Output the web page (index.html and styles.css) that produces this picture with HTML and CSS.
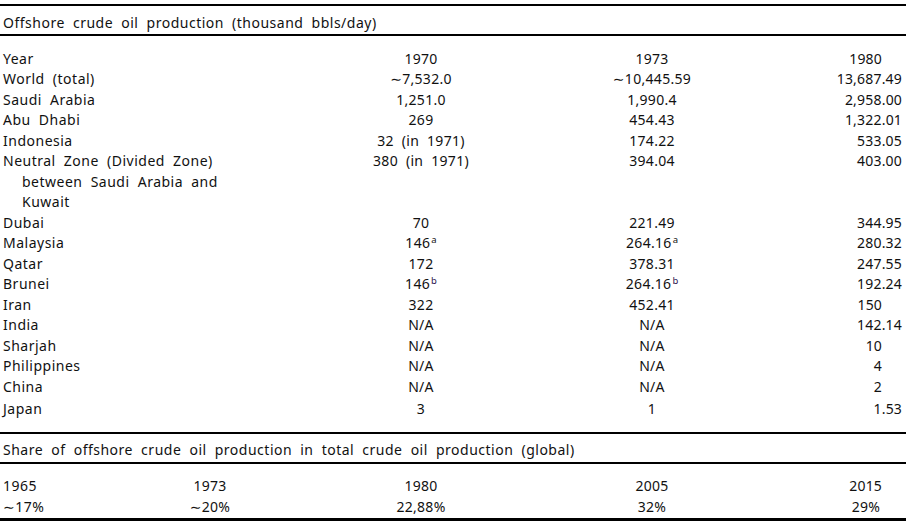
FILE: index.html
```html
<!DOCTYPE html>
<html>
<head>
<meta charset="utf-8">
<link rel="stylesheet" href="styles.css">
</head>
<body>
<div class="sheet">
  <table class="prod">
    <colgroup>
      <col class="c1"><col class="c2"><col class="c3"><col class="c4">
    </colgroup>
    <thead>
      <tr class="title-row"><th colspan="4">Offshore crude oil production (thousand bbls/day)</th></tr>
    </thead>
    <tbody>
      <tr class="first"><td>Year</td><td class="ctr">1970</td><td class="ctr">1973</td><td class="rt int">1980</td></tr>
      <tr><td>World (total)</td><td class="ctr">∼7,532.0</td><td class="ctr">∼10,445.59</td><td class="rt">13,687.49</td></tr>
      <tr><td>Saudi Arabia</td><td class="ctr">1,251.0</td><td class="ctr">1,990.4</td><td class="rt">2,958.00</td></tr>
      <tr><td>Abu Dhabi</td><td class="ctr">269</td><td class="ctr">454.43</td><td class="rt">1,322.01</td></tr>
      <tr><td>Indonesia</td><td class="ctr">32 (in 1971)</td><td class="ctr">174.22</td><td class="rt">533.05</td></tr>
      <tr><td class="hang">Neutral Zone (Divided Zone) between Saudi Arabia and Kuwait</td><td class="ctr">380 (in 1971)</td><td class="ctr">394.04</td><td class="rt">403.00</td></tr>
      <tr><td>Dubai</td><td class="ctr">70</td><td class="ctr">221.49</td><td class="rt">344.95</td></tr>
      <tr><td>Malaysia</td><td class="ctr">146<sup class="fn">a</sup></td><td class="ctr">264.16<sup class="fn">a</sup></td><td class="rt">280.32</td></tr>
      <tr><td>Qatar</td><td class="ctr">172</td><td class="ctr">378.31</td><td class="rt">247.55</td></tr>
      <tr><td>Brunei</td><td class="ctr">146<sup class="fn fn-b">b</sup></td><td class="ctr">264.16<sup class="fn fn-b">b</sup></td><td class="rt">192.24</td></tr>
      <tr><td>Iran</td><td class="ctr">322</td><td class="ctr">452.41</td><td class="rt int">150</td></tr>
      <tr><td>India</td><td class="ctr">N/A</td><td class="ctr">N/A</td><td class="rt">142.14</td></tr>
      <tr><td>Sharjah</td><td class="ctr">N/A</td><td class="ctr">N/A</td><td class="rt int">10</td></tr>
      <tr><td>Philippines</td><td class="ctr">N/A</td><td class="ctr">N/A</td><td class="rt int">4</td></tr>
      <tr><td>China</td><td class="ctr">N/A</td><td class="ctr">N/A</td><td class="rt int">2</td></tr>
      <tr class="last"><td>Japan</td><td class="ctr">3</td><td class="ctr">1</td><td class="rt">1.53</td></tr>
    </tbody>
  </table>
  <table class="share">
    <colgroup>
      <col class="s1"><col class="s2"><col class="s3"><col class="s4"><col class="s5">
    </colgroup>
    <thead>
      <tr class="title-row"><th colspan="5">Share of offshore crude oil production in total crude oil production (global)</th></tr>
    </thead>
    <tbody>
      <tr class="first"><td>1965</td><td class="ctr">1973</td><td class="ctr">1980</td><td class="ctr">2005</td><td class="rt int">2015</td></tr>
      <tr class="last"><td>∼17%</td><td class="ctr">∼20%</td><td class="ctr">22,88%</td><td class="ctr">32%</td><td class="rt int2">29%</td></tr>
    </tbody>
  </table>
</div>
</body>
</html>
```
FILE: styles.css
```css
html, body {
  margin: 0;
  padding: 0;
  background: #ffffff;
}
body {
  font-family: "Noto Sans", "Open Sans", "DejaVu Sans", sans-serif;
  font-size: 14px;
  color: #111111;
}
.sheet {
  width: 906px;
  padding-top: 4px;
}
table {
  width: 906px;
  table-layout: fixed;
  border-collapse: collapse;
}
td, th {
  padding: 0 3px;
  line-height: 20.5px;
  vertical-align: top;
  font-weight: normal;
  text-align: left;
  white-space: nowrap;
  letter-spacing: 0.5px;
  word-spacing: 4px;
}
.prod .c1 { width: 240px; }
.prod .c2 { width: 362px; }
.prod .c3 { width: 100px; }
.prod .c4 { width: 204px; }

.share .s1 { width: 120px; }
.share .s2 { width: 180px; }
.share .s3 { width: 242px; }
.share .s4 { width: 220px; }
.share .s5 { width: 144px; }

.title-row th {
  border-top: 2px solid #000;
  border-bottom: 2px solid #000;
  padding-top: 7px;
  padding-bottom: 0;
}
.share .title-row th {
  padding-top: 6px;
  padding-bottom: 2px;
}
.first td { padding-top: 13px; }
.prod .last td { padding-top: 2px; padding-bottom: 12px; }
.share .last td {
  padding-bottom: 1px;
  border-bottom: 3px solid #000;
}
.share .first td { padding-top: 12px; }

.ctr { text-align: center; letter-spacing: 0.3px; }
.rt { text-align: right; padding-right: 4px; letter-spacing: 0.2px; }
.rt.int { padding-right: 24px; }
.rt.int2 { padding-right: 26px; }

.hang {
  white-space: normal;
  padding-left: 22px;
  text-indent: -19px;
  padding-right: 4px;
}
.fn {
  font-size: 9.5px;
  line-height: 0;
  vertical-align: 5px;
  margin-left: 1px;
  letter-spacing: 0;
}
.fn-b { color: #2e1450; }
```
